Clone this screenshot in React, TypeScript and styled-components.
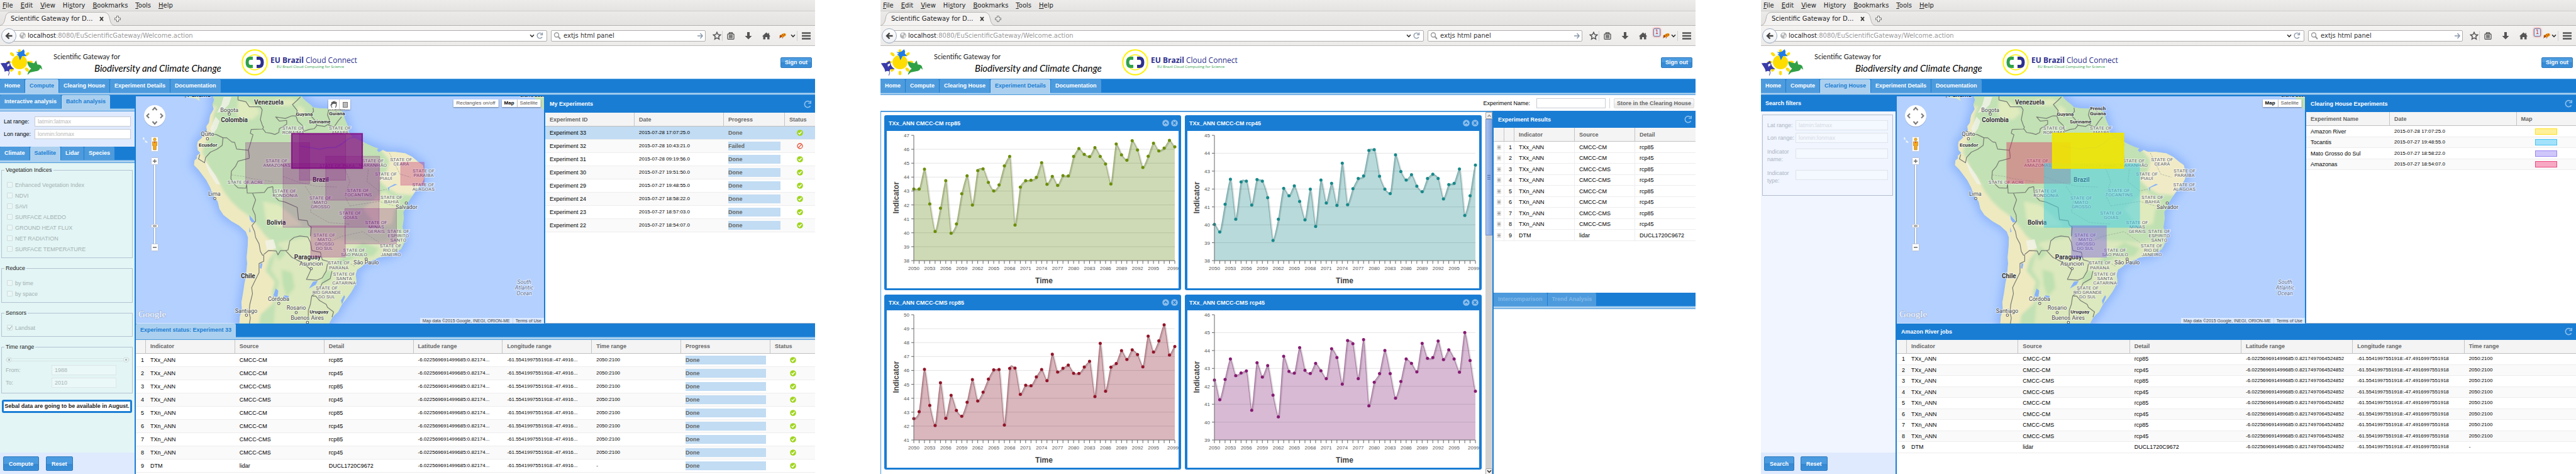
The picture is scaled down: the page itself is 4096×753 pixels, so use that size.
import React, { useId } from 'react';
import styled, { createGlobalStyle, css } from 'styled-components';

const ui = '"Liberation Sans", Arial, sans-serif';
const chromeFont = '"DejaVu Sans", sans-serif';
const color = {
  blue: '#1a7dd4',
  tab: '#4d9bdd',
  light: '#abd0ef',
  pale: '#dfeafe',
  teal: '#e3f5f5',
  grey: '#666',
};

const GlobalStyle = createGlobalStyle`
  * { box-sizing: border-box; }
  body { margin: 0; background: #fff; font: 9px/12px ${ui}; color: #000; }
  button, input { font: inherit; margin: 0; }
  button { padding: 0; border: 0; background: none; color: inherit; white-space: nowrap; }
  a { text-decoration: none; color: inherit; }
  svg { display: block; flex: none; }
  table { width: 100%; table-layout: fixed; border-collapse: separate; border-spacing: 0; }
`;

const Page = styled.main`
  display: grid;
  grid-template-columns: repeat(3, minmax(0, 1fr));
  gap: 104px;
  min-height: 100vh;
`;
const Browser = styled.section`
  display: flex;
  flex-direction: column;
  min-width: 0;
  overflow: hidden;
`;

/* ---------- browser chrome ---------- */
const MenuBar = styled.div`
  display: flex;
  gap: 12px;
  height: 18px;
  padding: 0 4px;
  border-bottom: 1px solid #cfcecb;
  background: linear-gradient(#edecea, #e4e3e1);
  font: 10px/17px ${chromeFont};
  color: #222;
`;
const TabStrip = styled.div`
  display: flex;
  align-items: flex-end;
  height: 23px;
  border-bottom: 1px solid #b4b2af;
  background: linear-gradient(#ebeae8, #e3e2e0);
  font: 10px/20px ${chromeFont};
  color: #222;
`;
const BrowserTab = styled.div`
  position: relative;
  display: flex;
  align-items: center;
  justify-content: space-between;
  width: 182px;
  height: 22px;
  padding: 0 17px;
  margin-bottom: -1px;
`;
const TabShape = styled.svg`
  position: absolute;
  inset: 0;
`;
const TabTitle = styled.span`
  position: relative;
`;
const TabClose = styled.button`
  position: relative;
  height: 10px;
`;
const NewTab = styled.button`
  padding: 0 0 5px;
`;
const ToolBar = styled.div`
  display: flex;
  align-items: center;
  height: 32px;
  border-bottom: 1px solid #bdbbb8;
  background: linear-gradient(#f4f3f2, #ecebea);
  font: 10px/16px ${chromeFont};
`;
const BackButton = styled.button`
  position: relative;
  z-index: 1;
  display: flex;
  align-items: center;
  justify-content: center;
  width: 24px;
  height: 24px;
  margin: 0 -6px 0 2px;
  border: 1px solid #9aa9bd;
  border-radius: 50%;
  background: linear-gradient(#fff, #eef0f3);
`;
const AddressBox = styled.div`
  display: flex;
  flex: 1;
  align-items: center;
  gap: 3px;
  height: 18px;
  padding: 0 5px 0 10px;
  border: 1px solid #b1afad;
  border-radius: 2px;
  background: #fff;
`;
const Address = styled.a`
  flex: 1;
  color: #9a9a9a;
  b { font-weight: normal; color: #222; }
`;
const SearchBox = styled.label`
  display: flex;
  align-items: center;
  gap: 4px;
  width: 246px;
  height: 18px;
  margin: 0 10px 0 6px;
  padding: 0 3px;
  border: 1px solid #b1afad;
  border-radius: 2px;
  background: #fff;
`;
const SearchInput = styled.input`
  flex: 1;
  min-width: 0;
  padding: 0;
  border: 0;
  background: none;
  color: #333;
  outline: 0;
`;
const Tool = styled.button<{ $w: number; $end?: boolean }>`
  position: relative;
  display: flex;
  align-items: center;
  justify-content: ${p => (p.$end ? 'flex-end' : 'center')};
  width: ${p => p.$w}px;
  height: 24px;
`;
const ToolRule = styled.span`
  width: 1px;
  height: 16px;
  background: #cfcfcf;
`;
const Badge = styled.span`
  position: absolute;
  top: 0;
  left: 2px;
  width: 11px;
  height: 13px;
  border: 1px solid #6f86ad;
  border-radius: 2px;
  box-shadow: 0 0 3px #e33;
  background: #dfe8f5;
  color: #c22;
  font: 8px/11px ${chromeFont};
  text-align: center;
`;

/* ---------- site header ---------- */
const SiteHeader = styled.header`
  display: flex;
  align-items: center;
  height: 52px;
  padding: 0 5px 0 0;
`;
const SiteTitle = styled.h1`
  display: flex;
  flex-direction: column;
  width: 299px;
  margin: 0 0 0 16px;
  font: 11px/19px Lato, sans-serif;
  color: #222;
  white-space: nowrap;
  em { padding-left: 65px; font-size: 15px; color: #000; }
`;
const Partner = styled.div`
  display: flex;
  align-items: center;
  gap: 4px;
  margin-right: auto;
  font: 12px/13px "Open Sans", sans-serif;
  color: #2c2f8c;
  white-space: nowrap;
  small { display: block; padding-left: 10px; font-size: 6px; line-height: 8px; color: #2fa24a; }
`;
const BlueButton = styled.button<{ $big?: boolean }>`
  height: ${p => (p.$big ? 23 : 17)}px;
  padding: 0 ${p => (p.$big ? 8 : 6)}px;
  border: 1px solid #2b78bd;
  border-radius: 2px;
  background: linear-gradient(#4b9be0 0 50%, #3588d2 50%, #3a8fd9);
  color: #fff;
  font-weight: bold;
`;

/* ---------- tabs and panels ---------- */
const TabBar = styled.nav<{ $top?: boolean }>`
  display: flex;
  flex: none;
  gap: 1px;
  height: 26px;
  border-top: ${p => (p.$top ? `1px solid ${color.tab}` : 0)};
  border-bottom: 1px solid ${color.tab};
  background: linear-gradient(${color.blue} 21px, #5fa8e3 21px 22px, ${color.light} 22px);
`;
const TabLink = styled.a<{ $on?: boolean; $off?: boolean }>`
  height: ${p => (p.$on ? 24 : 21)}px;
  padding: 0 7px;
  border-radius: 2px 2px 0 0;
  background: ${p => (p.$on ? color.light : color.tab)};
  color: ${p => (p.$on ? color.blue : p.$off ? '#82b9e8' : '#fff')};
  font-weight: bold;
  line-height: 21px;
  white-space: nowrap;
`;
const PanelTitle = styled.h2<{ $h?: number }>`
  display: flex;
  flex: none;
  align-items: center;
  justify-content: space-between;
  height: ${p => p.$h ?? 27}px;
  margin: 0;
  padding: 0 5px 0 7px;
  background: ${color.blue};
  color: #fff;
  font: bold 9px/12px ${ui};
`;
const Workspace = styled.div`
  display: grid;
  flex: 1;
  grid-template-columns: 216px minmax(0, 1fr) 431px;
  grid-template-rows: minmax(0, 1fr) 241px;
`;
const Sidebar = styled.aside<{ $bg: string }>`
  grid-row: 1 / 3;
  display: flex;
  flex-direction: column;
  border-right: 2px solid ${color.blue};
  background: ${p => p.$bg};
`;
const MapArea = styled.div`
  position: relative;
  border-top: 2px solid ${color.blue};
  overflow: hidden;
`;
const SidePanel = styled.section`
  border-left: 2px solid ${color.blue};
  border-bottom: 1px solid #9fb6cc;
`;
const BottomPanel = styled.section<{ $edge?: boolean }>`
  grid-column: 2 / 4;
  border-bottom: ${p => (p.$edge ? '1px solid #bbb' : 0)};
`;
const ButtonBar = styled.div<{ $gap: number }>`
  display: flex;
  align-items: center;
  gap: ${p => p.$gap}px;
  height: 36px;
  margin-top: auto;
  padding: 0 5px;
  background: ${color.pale};
`;

/* ---------- tables ---------- */
const Col = styled.col<{ $w?: string }>`
  width: ${p => p.$w ?? 'auto'};
`;
const Th = styled.th`
  height: 22px;
  padding: 0 7px;
  border-right: 1px solid #c4c4c4;
  border-bottom: 1px solid #c0c0c0;
  background: #f4f4f4;
  color: ${color.grey};
  text-align: left;
  white-space: nowrap;
  &:last-child { border-right: 0; }
`;
const Tr = styled.tr<{ $compact?: boolean; $striped?: boolean; $selected?: boolean }>`
  height: 21px;
  background: #fff;
  ${p => p.$compact && css`
    height: 18px;
    &:nth-child(even) { height: 17px; }
  `}
  ${p => p.$striped && css`&:nth-child(even) { background: #fafafa; }`}
  ${p => p.$selected && css`background: #c1dcf3;`}
`;
const Td = styled.td<{ $kind?: 'num' | 'index' | 'center'; $ruled?: boolean }>`
  padding: 0 7px;
  border-bottom: 1px solid #ededed;
  border-right: ${p => (p.$ruled ? '1px solid #ededed' : 0)};
  white-space: nowrap;
  line-height: 12px;
  ${p => p.$kind === 'num' && css`font-size: 8px;`}
  ${p => p.$kind === 'index' && css`padding: 0 3px 0 0; text-align: right;`}
  ${p => p.$kind === 'center' && css`
    padding: 0;
    text-align: center;
    svg { margin: 0 auto; }
  `}
`;
const Bar = styled.div`
  height: 14px;
  background: #c1dcf3;
  color: ${color.grey};
  font-weight: bold;
  line-height: 14px;
`;
const Swatch = styled.div<{ $c: string; $bg: string }>`
  width: 35px;
  height: 10px;
  margin: 0 auto;
  border: 1px solid ${p => p.$c};
  background: ${p => p.$bg};
`;

/* ---------- forms ---------- */
const RangeForm = styled.form`
  display: grid;
  grid-template-columns: 49px 1fr;
  gap: 4px 0;
  align-items: center;
  height: 56px;
  padding: 8px 6px 12px;
  background: ${color.pale};
`;
const Field = styled.input<{ $faint?: boolean }>`
  width: 100%;
  height: 16px;
  padding: 0 4px;
  border: 1px solid ${p => (p.$faint ? '#dde5ea' : '#c6ccd4')};
  background: ${p => (p.$faint ? 'rgba(255,255,255,.3)' : '#fff')};
  color: #a9b5b5;
  outline: 0;
  &::placeholder { color: ${p => (p.$faint ? '#d5dbe4' : '#b9b9b9')}; opacity: 1; }
`;
const Filters = styled.form`
  display: flex;
  flex-direction: column;
  gap: 10px;
  padding: 5px 3px 0 2px;
`;
const Group = styled.fieldset`
  min-width: 0;
  margin: 0;
  padding: 9px 6px 5px;
  border: 1px solid #b5c2d2;
  legend { padding: 0 2px; margin-left: -2px; line-height: 12px; color: #222; }
`;
const Check = styled.label`
  display: flex;
  align-items: center;
  gap: 4px;
  height: 17px;
  padding-left: 2px;
  color: #a3b2b2;
`;
const Box = styled.input`
  position: relative;
  appearance: none;
  width: 9px;
  height: 9px;
  border: 1px solid #cfdcdc;
  border-radius: 1px;
  background: #ebf7f7;
  &:checked::after {
    content: '';
    position: absolute;
    left: 2px;
    top: -1px;
    width: 3px;
    height: 6px;
    border: solid #9fb0b0;
    border-width: 0 1px 1px 0;
    rotate: 40deg;
  }
`;
const YearSlider = styled.div`
  position: relative;
  display: flex;
  height: 10px;
  margin: 0 -2px 4px 0;
`;
const Range = styled.input<{ $over?: boolean }>`
  appearance: none;
  position: ${p => (p.$over ? 'absolute' : 'static')};
  inset: 0;
  width: 100%;
  height: 10px;
  background: none;
  pointer-events: none;
  &::-webkit-slider-runnable-track {
    height: 5px;
    border: 1px solid #d8e5e6;
    border-radius: 3px;
  }
  &::-webkit-slider-thumb {
    appearance: none;
    width: 9px;
    height: 9px;
    margin-top: -3px;
    border: 1px solid #cfdcdc;
    border-radius: 50%;
    background: radial-gradient(#a9b8b8 1px, #eaf6f6 2px);
  }
`;
const Years = styled.div`
  display: grid;
  grid-template-columns: 73px 103px;
  gap: 4px 0;
  align-items: center;
  padding-bottom: 3px;
  color: #a3b2b2;
`;
const Notice = styled.p`
  height: 21px;
  margin: 0 1px;
  border: 3px solid ${color.blue};
  border-radius: 3px;
  background: #fff;
  color: #222;
  font-weight: bold;
  line-height: 15px;
  text-align: center;
  white-space: nowrap;
`;
const SearchGroup = styled.form`
  display: grid;
  grid-template-columns: 45px 147px;
  gap: 4px 0;
  align-items: center;
  margin: 5px 4px 0 2px;
  padding: 8px 7px 15px;
  border: 1px solid #b3bccb;
  color: #aeb4c1;
`;
const Tall = styled.div`
  display: contents;
  label { height: 24px; margin: 4px 0 2px; }
  input { align-self: start; margin-top: 5px; }
`;

/* ---------- map overlays ---------- */
const MapSvg = styled.svg`
  width: 100%;
  height: 100%;
  font-family: Roboto, sans-serif;
`;
const Controls = styled.div`
  position: absolute;
  top: 14px;
  left: 13px;
`;
const MapTypes = styled.div`
  position: absolute;
  top: 5px;
  right: 5px;
  display: flex;
`;
const MapButton = styled.button<{ $on?: boolean; $apart?: boolean }>`
  height: 12px;
  margin-right: ${p => (p.$apart ? 5 : 0)}px;
  padding: 0 4px;
  border-right: 1px solid #ddd;
  background: #fff;
  box-shadow: 0 1px 2px rgba(0, 0, 0, .4);
  color: ${p => (p.$on ? '#000' : '#555')};
  font-size: 8px;
  font-weight: ${p => (p.$on ? 'bold' : 'normal')};
  line-height: 12px;
`;
const DrawTools = styled.div`
  position: absolute;
  top: 5px;
  left: 306px;
  display: flex;
  gap: 1px;
  background: #ccc;
  box-shadow: 0 1px 2px rgba(0, 0, 0, .4);
`;
const DrawTool = styled.button`
  display: flex;
  align-items: center;
  justify-content: center;
  width: 17px;
  height: 16px;
  background: #fff;
`;
const Credits = styled.div`
  position: absolute;
  right: 0;
  bottom: 0;
  display: flex;
  background: rgba(245, 248, 255, .65);
  color: #444;
  font-size: 7px;
  line-height: 9px;
  a, span { padding: 0 4px; }
  a { border-left: 1px solid #c5d5f0; }
`;

/* ---------- experiment details ---------- */
const StoreBar = styled.form`
  display: flex;
  align-items: center;
  justify-content: flex-end;
  gap: 6px;
  height: 25px;
  padding-right: 2px;
  label { padding-right: 4px; }
`;
const NameField = styled(Field)`
  width: 110px;
`;
const Rule = styled.span`
  width: 1px;
  height: 16px;
  background: #d4d4d4;
`;
const StoreButton = styled.button`
  height: 16px;
  padding: 0 4px;
  border: 1px solid #dcdcdc;
  border-radius: 2px;
  background: linear-gradient(#f6f6f6 50%, #ececec 50%);
  color: ${color.grey};
  font-weight: bold;
`;
const Details = styled.div`
  display: grid;
  flex: 1;
  grid-template-columns: minmax(0, 1fr) 11px 323px;
  border-top: 2px solid ${color.tab};
`;
const Charts = styled.div`
  display: grid;
  grid-template-columns: 1fr 1fr;
  align-content: start;
  gap: 7px 6px;
  padding: 5px 6px 0 5px;
  border-left: 1px solid ${color.tab};
`;
const ChartCard = styled.article`
  padding: 0 4px 3px;
  border-radius: 3px;
  background: ${color.blue};
`;
const CardTools = styled.span`
  display: flex;
  gap: 3px;
  margin-right: -4px;
`;
const ChartTitle = styled(PanelTitle)`
  padding-left: 3px;
`;
const Plot = styled.svg`
  width: 100%;
  height: auto;
  background: #fff;
  font: 8px ${ui};
`;
const ScrollTrack = styled.div`
  display: flex;
  flex-direction: column;
  background: #d3d2d0;
`;
const ScrollEnd = styled.button<{ $last?: boolean }>`
  display: flex;
  align-items: center;
  justify-content: center;
  height: 11px;
  margin-top: ${p => (p.$last ? 'auto' : 0)};
  border: 1px solid #a5a5a5;
  border-radius: 2px;
  background: #f2f1f0;
`;
const ScrollThumb = styled.div`
  display: flex;
  align-items: center;
  justify-content: center;
  height: 185px;
  border: 1px solid #6d8fc8;
  background: linear-gradient(90deg, #a9c3f0, #7fa3e0);
`;
const Results = styled.section`
  display: flex;
  flex-direction: column;
  margin-top: -2px;
  border-left: 2px solid ${color.blue};
`;
const ResultList = styled.div`
  height: 262px;
`;

/* ---------- icons ---------- */
const RefreshIcon = ({ stroke = '#8dc0ec', size = 13 }: { stroke?: string; size?: number }) => (
  <svg width={size} height={size} viewBox="0 0 13 13" fill="none" stroke={stroke} strokeWidth="1.6">
    <path d="M10.6 9.3A5 5 0 1 1 10 3.2" />
    <path d="M11.2 1v4H7.2" />
  </svg>
);
const OkIcon = () => (
  <svg width="10" height="10" viewBox="0 0 10 10">
    <circle cx="5" cy="5" r="4.8" fill="#9fd51c" />
    <path d="M2.6 5.1 4.4 7 7.5 3" fill="none" stroke="#fff" strokeWidth="1.4" />
  </svg>
);
const FailIcon = () => (
  <svg width="10" height="10" viewBox="0 0 10 10" fill="none" stroke="#e8543a" strokeWidth="1.3">
    <circle cx="5" cy="5" r="4" />
    <path d="M2.4 7.6 7.6 2.4" />
  </svg>
);
const ExpandIcon = () => (
  <svg width="7" height="8" viewBox="0 0 7 8">
    <rect width="7" height="8" fill="#e3e3e3" />
    <path d="M3.5 1.5v5M1 4h5" stroke="#8b8b8b" />
  </svg>
);
const RoundIcon = ({ d }: { d: string }) => (
  <svg width="11" height="11" viewBox="0 0 11 11">
    <circle cx="5.5" cy="5.5" r="5.3" fill="#8cbdea" />
    <path d={d} fill="none" stroke={color.blue} strokeWidth="1.5" />
  </svg>
);
const Chevron = ({ up, faint }: { up?: boolean; faint?: boolean }) => (
  <svg width="8" height="6" viewBox="0 0 8 6" fill="none" stroke={faint ? '#999' : '#333'} strokeWidth="1.6">
    <path d={up ? 'M1.5 4.5 4 2l2.5 2.5' : 'M1 1.2 4 4.4l3-3.2'} />
  </svg>
);

const GatewayLogo = () => (
  <svg width="69" height="44" viewBox="0 160 280 190" preserveAspectRatio="none">
    <g fill="#fd0">
      <circle cx="126" cy="254" r="49" />
      <ellipse cx="126" cy="180" rx="9" ry="15" />
      <ellipse cx="126" cy="328" rx="9" ry="15" />
      <ellipse cx="78" cy="200" rx="10" ry="16" transform="rotate(-42 78 200)" />
      <ellipse cx="176" cy="199" rx="9" ry="15" transform="rotate(40 176 199)" />
      <ellipse cx="57" cy="254" rx="16" ry="9" />
      <ellipse cx="195" cy="254" rx="16" ry="10" />
      <ellipse cx="77" cy="306" rx="9" ry="15" transform="rotate(40 77 306)" />
      <ellipse cx="174" cy="305" rx="10" ry="16" transform="rotate(-40 174 305)" />
    </g>
    <path fill="#1f7be6" d="M102 184q20 4 32-2l19-17 6 16-2 14 15 18-29-1-14 28q-5-10-8-26l-15-16q10 1 13-2z" />
    <path fill="#3a3aa8" d="M3 262q18-5 32-2l24-16 7 22q4 20 26 34l-28 2-6 14q-20-4-27 5-3-22-12-34z" />
    <path fill="none" stroke="#3a3aa8" strokeWidth="4" d="M56 312q8 14-2 33" />
    <path fill="#fff" d="m46 270 16-8-1 16-9 2-3 10z" />
    <path fill="#2fa045" d="M176 248q24 10 44 14l13-20 8 28q18-2 26 12l6 24-14-12q-4 22-30 22l-34 8-18 18q2-24 24-44-24-18-25-50z" />
  </svg>
);
const PartnerLogo = () => (
  <svg width="42" height="42" viewBox="0 0 42 42" fill="none">
    <circle cx="21" cy="21" r="19.8" stroke="#fff200" strokeWidth="2" />
    <circle cx="21" cy="21" r="12" stroke="#fff200" strokeWidth="1.6" />
    <path d="M18 14.5h-4q-5 0-5 6.5t5 6.5h4" stroke="#2fa24a" strokeWidth="5" />
    <path d="M24 14.5h4q5 0 5 6.5t-5 6.5h-4" stroke="#2c2f8c" strokeWidth="5" />
  </svg>
);

/* ---------- shared browser frame ---------- */
const menus: [string, string, string][] = [
  ['', 'F', 'ile'], ['', 'E', 'dit'], ['', 'V', 'iew'], ['Hi', 's', 'tory'],
  ['', 'B', 'ookmarks'], ['', 'T', 'ools'], ['', 'H', 'elp'],
];
const sections = ['Home', 'Compute', 'Clearing House', 'Experiment Details', 'Documentation'];

const GatewayWindow = ({ active, badge, children }: { active: string; badge?: boolean; children: React.ReactNode }) => (
  <Browser>
    <MenuBar>
      {menus.map(([a, key, b]) => <button key={b}>{a}<u>{key}</u>{b}</button>)}
    </MenuBar>
    <TabStrip>
      <BrowserTab>
        <TabShape width="182" height="22" viewBox="0 0 182 22">
          <path d="M0 21.5Q6 21 8 11 9 1 16 .5H166Q173 1 174.500 11 176 21 182 21.5" fill="#f4f3f2" stroke="#b4b2af" />
        </TabShape>
        <TabTitle>Scientific Gateway for D...</TabTitle>
        <TabClose aria-label="Close tab">
          <svg width="7" height="10" viewBox="0 0 7 10"><path d="m1 2 5 6M6 2 1 8" stroke="#333" strokeWidth="1.8" /></svg>
        </TabClose>
      </BrowserTab>
      <NewTab aria-label="New tab">
        <svg width="10" height="10" viewBox="0 0 10 10">
          <path d="M3.5.5h3v3h3v3h-3v3h-3v-3h-3v-3h3z" fill="#f5f5f5" stroke="#777" />
        </svg>
      </NewTab>
    </TabStrip>
    <ToolBar>
      <BackButton aria-label="Back">
        <svg width="12" height="12" viewBox="0 0 12 12" fill="none" stroke="#444" strokeWidth="2.4">
          <path d="M11.5 6H2.5M6.5 1.5 2 6l4.5 4.5" />
        </svg>
      </BackButton>
      <AddressBox>
        <svg width="10" height="11" viewBox="0 0 10 11">
          <circle cx="5" cy="5.5" r="5" fill="#b5b5b5" />
          <path d="M1.5 3 5 1l1 2.5L3.5 6zM6 5.5l3-1-.5 3.5L6.5 10z" fill="#efefef" />
        </svg>
        <Address href="#address"><b>localhost</b>:8080/EuScientificGateway/Welcome.action</Address>
        <Chevron />
        <RefreshIcon stroke="#8a97a8" size={11} />
      </AddressBox>
      <SearchBox>
        <svg width="12" height="12" viewBox="0 0 12 12" fill="none" stroke="#999" strokeWidth="1.4">
          <circle cx="5" cy="4.5" r="3.5" /><path d="m7.5 7 3.5 4" strokeWidth="2" />
        </svg>
        <SearchInput aria-label="Search" defaultValue="extjs html panel" />
        <svg width="9" height="10" viewBox="0 0 9 10" fill="none" stroke="#8795a8" strokeWidth="1.4"><path d="M0 5h8M4.5 1 8 5 4.5 9" /></svg>
      </SearchBox>
      <Tool $w={16} aria-label="Bookmark">
        <svg width="14" height="14" viewBox="0 0 14 14">
          <path d="m7 1.2 1.7 3.7 4 .5-3 2.7.8 4.1L7 10.2l-3.5 2 .8-4.1-3-2.7 4-.5z" fill="none" stroke="#555" strokeWidth="1.5" />
        </svg>
      </Tool>
      <ToolRule />
      <Tool $w={26} aria-label="Library">
        <svg width="12" height="12" viewBox="0 0 12 12" fill="none" stroke="#555" strokeWidth="1.3">
          <rect x="1" y="3" width="10" height="8.3" rx="1" /><path d="M3.5 3V1h5v2M3 5.5h6M3 7.3h6M3 9.2h6" />
        </svg>
      </Tool>
      <Tool $w={29} aria-label="Downloads">
        <svg width="12" height="12" viewBox="0 0 12 12"><path d="M4 0h4v6h3.5L6 11.5.5 6H4z" fill="#555" /></svg>
      </Tool>
      <Tool $w={29} aria-label="Home page">
        <svg width="13" height="12" viewBox="0 0 13 12"><path d="M6.5.5 0 6.5l1.5.5V11.5H5V8h3v3.5h3.5V7l1.5-.5-2-2V1.5H9.5v1.7z" fill="#555" /></svg>
      </Tool>
      <Tool $w={badge ? 28 : 22} $end={badge} aria-label="Firebug">
        {badge && <Badge>1</Badge>}
        <svg width="12" height="10" viewBox="0 0 12 10">
          <ellipse cx="7.5" cy="4" rx="4.5" ry="2.8" fill="#f59a12" transform="rotate(-22 7.5 4)" />
          <circle cx="3.5" cy="5.5" r="2" fill="#b5500a" />
          <path d="m6 2 2 4M9 1.5l1 3M1 8.5l3-2M6 9 7 7" stroke="#8a2a08" strokeWidth=".8" />
        </svg>
      </Tool>
      <Tool $w={12} aria-label="Firebug options"><Chevron /></Tool>
      <ToolRule />
      <Tool $w={28} aria-label="Menu">
        <svg width="14" height="12" viewBox="0 0 14 12"><path d="M0 1.5h14M0 6h14M0 10.5h14" stroke="#555" strokeWidth="2.4" /></svg>
      </Tool>
    </ToolBar>
    <SiteHeader>
      <GatewayLogo />
      <SiteTitle>Scientific Gateway for<em>Biodiversity and Climate Change</em></SiteTitle>
      <Partner>
        <PartnerLogo />
        <div><b>EU Brazil</b> Cloud Connect<small>EU Brazil Cloud Computing for Science</small></div>
      </Partner>
      <BlueButton>Sign out</BlueButton>
    </SiteHeader>
    <TabBar $top aria-label="Sections">
      {sections.map(s => <TabLink key={s} href={`#${s}`} $on={s === active}>{s}</TabLink>)}
    </TabBar>
    {children}
  </Browser>
);

/* ---------- map ---------- */
/* Map features are kept on the survey grid and projected to drawing units. */
const gx = (x: number) => Math.round((x - 517) * 4.18) / 10;
const gy = (y: number) => Math.round((y - 636) * 2.402) / 10;
const path = (pts: string, close?: boolean) =>
  'M' + pts.split(' ').map(p => {
    const [x, y] = p.split(',').map(Number);
    return `${gx(x)} ${gy(y)}`;
  }).join('L') + (close ? 'Z' : '');

const west = '808,630 814,660 808,690 813,720 800,760 797,785 795,810 785,835 787,860 775,880 768,910 752,935 750,960 752,990 762,1010 748,1030 750,1045 740,1060 738,1090 755,1120 768,1150 785,1190 800,1240 810,1290 828,1330 835,1380 850,1420 880,1460 910,1490 935,1530 943,1568 942,1628 938,1700 940,1740 935,1830 930,1870 925,1930 918,2000 920,2050 912,2090 910,2140';
const east = '1250,2140 1262,2100 1272,2080 1285,2060 1300,2010 1318,1970 1335,1930 1345,1900 1355,1860 1352,1810 1358,1780 1375,1760 1390,1735 1425,1712 1440,1700 1475,1690 1500,1670 1525,1645 1537,1600 1540,1560 1530,1500 1535,1440 1533,1400 1545,1370 1550,1340 1565,1300 1580,1260 1600,1220 1612,1180 1614,1140 1607,1090 1590,1070 1566,1035 1540,1012 1500,1003 1470,1003 1455,990 1440,1005 1432,990 1438,980 1420,970 1395,950 1378,935 1340,905 1325,870 1322,830 1310,780 1305,740 1280,718 1245,716 1215,715 1190,708 1180,690 1165,670 1150,645 1148,630';
const coast = path(`${west} ${east}`, true);
const andes = path('825,700 812,760 812,840 800,900 775,960 770,1010 785,1060 800,1120 830,1190 850,1260 880,1330 910,1380 950,1430 985,1500 1010,1560 1040,1600 1045,1660 1020,1720 1010,1790 1045,1860 1035,1930 1040,2000 990,2080 985,2140 880,2140 880,1600 700,1200 700,900 790,700', true);
const northeast = path('1440,975 1480,1060 1470,1130 1440,1190 1470,1240 1510,1280 1570,1290 1640,1190 1640,1050 1560,980', true);
const south = path('1060,1600 1180,1560 1330,1590 1450,1600 1560,1560 1400,1800 1280,2140 1040,2140 1050,1950 1060,1860 1030,1780', true);
const meadow = [
  '905,660 940,670 975,700 990,745 960,790 920,790 900,760',
  '1000,1330 1060,1350 1120,1440 1150,1490 1060,1500 1010,1450',
  '1130,690 1160,720 1150,780 1128,745',
  '1380,1380 1460,1260 1520,1330 1500,1480 1430,1490',
  '1040,660 1100,650 1140,670 1100,700 1050,700',
].map(p => path(p, true)).join('');
const forest = [
  '1500,1380 1530,1370 1530,1500 1535,1580 1490,1600 1490,1480',
  '1240,1790 1262,1790 1255,1850 1225,1880 1222,1850',
  '1060,1620 1088,1670 1060,1720 1050,1690',
  '1380,1600 1440,1640 1420,1690 1350,1700 1290,1760 1270,1740 1330,1660',
  '1070,1780 1110,1800 1120,1900 1090,1960 1075,1880',
].map(p => path(p, true)).join('');
const snow = [
  '850,640 880,640 870,690 845,735 825,745 842,690',
  '820,770 835,800 825,850 808,890 800,850',
  '1008,1590 1040,1580 1050,1640 1015,1650',
  '775,1050 800,1110 820,1160 838,1220 822,1215 795,1140',
].map(p => path(p, true)).join('');
const lakes = [
  '948,1420 960,1445 970,1465 958,1470 950,1450', '1048,1905 1058,1920 1055,1960 1038,1960',
  '1080,1950 1098,1955 1094,1975 1078,1972', '990,1740 998,1740 994,1775 988,1770',
  '1190,1860 1208,1855 1200,1880 1175,1905', '1296,1985 1308,1950 1312,1960 1300,2010',
  '948,1500 953,1530 948,1535', '1500,1215 1510,1218 1480,1240 1478,1265 1474,1240',
].map(p => path(p, true)).join('');
const borders = [
  '905,636 905,660 935,672 948,705 990,705 997,725 990,790 998,830 1002,840 998,852 955,855 952,880 962,890 945,990 948,1035',
  '780,865 800,885 822,888 848,910 862,910 882,938 892,940 900,985 945,992 948,1045',
  '848,910 845,960 825,985 800,1005 782,1040 778,1075 755,1050 760,1020',
  '948,1045 905,1065 895,1100 880,1130 878,1180 890,1215 905,1240 935,1243 938,1215 940,1275 960,1275 1005,1270 1018,1240 1037,1232',
  '1037,1232 1040,1290 1060,1325 1085,1335 1130,1370 1135,1450 1168,1458 1172,1485 1183,1500 1180,1560',
  '960,1275 972,1320 960,1380 970,1420 972,1460 958,1490 968,1530 972,1568 985,1610 990,1660 998,1685 1003,1685',
  '1003,1680 1020,1655 1050,1657 1057,1683 1066,1655 1086,1655 1095,1650 1102,1590 1118,1568 1140,1558 1170,1565 1180,1600 1186,1655 1218,1665 1225,1715 1245,1725 1250,1745',
  '1086,1655 1110,1700 1150,1735 1182,1780 1172,1820 1165,1845 1205,1850 1225,1835 1240,1790 1245,1740',
  '1003,1685 1003,1725 985,1740 985,1800 965,1870 957,1900 960,1940 950,2010 947,2060 952,2100 948,2140',
  '1262,1790 1255,1840 1225,1870 1218,1895 1195,1940 1185,1955 1180,2010 1172,2050 1172,2100',
  '1188,1955 1200,1955 1215,1985 1240,2010 1245,2030 1268,2060 1262,2095',
  '1000,852 1010,875 1030,880 1045,888 1060,875 1062,850 1090,820 1090,795 1062,800 1048,772 1085,782 1110,765 1125,765',
  '1142,640 1128,665 1112,690 1130,730 1125,765 1132,800 1150,830 1155,868 1175,855 1195,850 1205,828 1235,835 1245,823 1270,838 1285,800 1298,772',
  '1190,712 1192,735 1180,760 1195,790 1205,828', '1250,720 1245,760 1252,790 1250,825', '705,632 705,645',
].map(p => path(p)).join('');
const stateLines = [
  '880,1155 925,1165 960,1180 1040,1200', '1076,1165 1130,1200 1200,1230 1280,1235', '1310,1110 1330,1200 1310,1290 1330,1360',
  '1400,1120 1395,1200 1440,1260 1470,1250', '1380,950 1375,1010 1390,1080', '1160,1230 1190,1310 1180,1400 1250,1470 1330,1480',
  '1330,1360 1440,1330 1500,1360', '1250,1600 1300,1560 1380,1530 1440,1600', '1250,1730 1310,1720 1350,1760', '1480,1010 1500,1080 1520,1150 1560,1170',
].map(p => path(p)).join('');

type Label = [number, number, ...string[]];
const countries: Label[] = [
  [757, 640, 'Panama'], [1022, 690, 'Venezuela'], [891, 808, 'Colombia'], [1050, 1483, 'Bolivia'],
  [1219, 1203, 'Brazil'], [1169, 1713, 'Paraguay'], [943, 1839, 'Chile'],
];
const smallCountries: Label[] = [
  [1157, 764, 'Guyana'], [1215, 816, 'Suriname'], [1281, 728, 'French', 'Guiana'], [791, 970, 'Ecuador'],
  [1213, 2070, 'Uruguay'], [2030, 640, 'Sierra Leone'],
];
const states: Label[] = [
  [1115, 856, 'STATE OF', 'RORAIMA'], [1292, 857, 'STATE OF', 'AMAPÁ'], [1052, 1071, 'STATE OF', 'AMAZONAS'],
  [1281, 1106, 'STATE OF PARÁ'], [1417, 1071, 'STATE OF', 'MARANHÃO'], [1525, 1065, 'STATE OF', 'CEARÁ'],
  [1467, 1159, 'STATE OF', 'PIAUÍ'], [933, 1213, 'STATE OF ACRE'], [1084, 1272, 'STATE OF', 'RONDÔNIA'],
  [1361, 1267, 'STATE OF', 'TOCANTINS'], [1218, 1319, 'STATE OF', 'MATO', 'GROSSO'], [1488, 1315, 'STATE OF', 'BAHIA'],
  [1331, 1417, 'STATE OF', 'GOIÁS'], [1430, 1479, 'STATE OF', 'MINAS', 'GERAIS'], [1514, 1538, 'STATE OF', 'ESPIRITO', 'SANTO'],
  [1233, 1564, 'STATE OF', 'MATO', 'GROSSO', 'DO SUL'], [1485, 1633, 'STATE OF', 'RIO DE', 'JANEIRO'],
  [1346, 1662, 'STATE OF', 'SÃO PAULO'], [1288, 1748, 'STATE OF', 'PARANÁ'], [1308, 1822, 'STATE OF', 'SANTA', 'CATARINA'],
  [1242, 1912, 'STATE OF', 'RIO GRANDE', 'DO SUL'], [1610, 1140, 'STATE OF', 'PARAÍBA'], [1609, 1232, 'STATE OF', 'ALAGOAS'],
];
const cities: [string, number, number, number, number][] = [
  ['Bogota', 872, 738, 872, 754], ['Quito', 789, 899, 789, 916], ['Lima', 815, 1294, 817, 1311],
  ['Salvador', 1545, 1382, 1544, 1341], ['São Paulo', 1392, 1748, 1392, 1711], ['Asuncion', 1183, 1756, 1183, 1774],
  ['Córdoba', 1059, 1987, 1060, 2004], ['Rosario', 1126, 2044, 1126, 2064], ['Santiago', 936, 2066, 937, 2081],
  ['Buenos Aires', 1168, 2112, 1169, 2129],
];

const Labels = ({ list, step, ...rest }: { list: Label[]; step: number } & React.SVGProps<SVGGElement>) => (
  <g textAnchor="middle" {...rest}>
    {list.map(([x, y, ...lines]) => lines.map((line, i) => (
      <text key={line + x + i} x={gx(x)} y={gy(y) + i * step}>{line}</text>
    )))}
  </g>
);

type Zone = { x: [number, number]; y: [number, number]; fill: string; opacity: number; edge?: number; edgeOpacity?: number };

const RegionMap = ({ zones, tools }: { zones: Zone[]; tools?: boolean }) => {
  const id = useId().replace(/:/g, '');
  return (
    <MapArea>
      <MapSvg viewBox="0 0 648 360" preserveAspectRatio="xMidYMid slice" role="img" aria-label="Map of South America">
        <defs>
          <clipPath id={`land${id}`}><path d={coast} /></clipPath>
          <filter id={`shelf${id}`} x="-20%" y="-20%" width="140%" height="140%"><feGaussianBlur stdDeviation="7" /></filter>
          <filter id={`soft${id}`}><feGaussianBlur stdDeviation="2" /></filter>
        </defs>
        <rect width="648" height="360" fill="#b3d0ff" />
        <path d={coast} fill="#8fb6fb" stroke="#8fb6fb" strokeWidth="12" filter={`url(#shelf${id})`} />
        <path d={coast} fill="#c2e1b4" />
        <g clipPath={`url(#land${id})`}>
          <g filter={`url(#soft${id})`}>
            <path d={south} fill="#dce8bd" />
            <path d={meadow} fill="#dfeabd" />
            <path d={andes} fill="#efe9c0" />
            <path d={northeast} fill="#f0ebc6" />
            <path d={forest} fill="#bfe0b0" />
          </g>
          <path d={snow} fill="#f1f2ea" opacity=".8" />
        </g>
        <path d={path('2025,630 2040,665 2052,690 2060,715 2075,740 2075,630', true)} fill="#c2e1b4" />
        <path d={path('715,630 720,645 745,650 760,668 755,640 775,630', true)} fill="#dcebc0" />
        <path d={path('543,910 548,905 550,925 545,922', true) + path('552,925 560,935 562,945 552,940', true)} fill="#eef4ee" />
        <path d={lakes} fill="#88b2fb" />
        <path d={stateLines} fill="none" stroke="#9aa59a" strokeWidth=".7" strokeDasharray="3 1.5" />
        <path d={borders} fill="none" stroke="#777d74" strokeWidth="1.2" strokeLinejoin="round" />
        <path d={path('1140,965 1180,975 1215,985 1245,975 1275,975 1300,950 1325,915 1350,905')} fill="none" stroke="#88b2fb" strokeWidth="1.5" />
        <g stroke="#fff" strokeOpacity=".6" strokeWidth="2" paintOrder="stroke" strokeLinejoin="round">
          <Labels list={states} step={7} fontSize="8" fill="#666" />
          <Labels list={countries} step={7} fontSize="10" fontWeight="bold" fill="#333" />
          <Labels list={smallCountries} step={8} fontSize="8" fontWeight="bold" fill="#333" />
          <g fontSize="9" fill="#444" textAnchor="middle">
            {cities.map(([name, x, y]) => <text key={name} x={gx(x)} y={gy(y)}>{name}</text>)}
          </g>
          <Labels list={[[1992, 1874, 'South', 'Atlantic', 'Ocean']]} step={9} fontSize="9" fontStyle="italic" fill="#5a6f96" />
        </g>
        <g fill="#fff" stroke="#555">
          {cities.map(([name, , , x, y]) => <circle key={name} cx={gx(x)} cy={gy(y)} r="1.8" />)}
        </g>
        {zones.map((z, i) => (
          <rect key={i} x={gx(z.x[0])} y={gy(z.y[0])} width={gx(z.x[1]) - gx(z.x[0])} height={gy(z.y[1]) - gy(z.y[0])}
            fill={z.fill} fillOpacity={z.opacity} stroke={z.fill} strokeWidth={z.edge ?? 1} strokeOpacity={z.edgeOpacity ?? 0.25} />
        ))}
        <text x="4" y="350" fontFamily="Liberation Serif, serif" fontSize="15" fill="#fff" stroke="#8fa5cc" strokeWidth="1" paintOrder="stroke">Google</text>
      </MapSvg>
      <Controls>
        <svg width="40" height="236" viewBox="0 0 40 236">
          <circle cx="17" cy="18" r="17" fill="#7d8fae" opacity=".6" />
          <circle cx="17" cy="17" r="17" fill="#fff" />
          <path d="m13.5 8 3.5-4 3.5 4M13.5 26l3.5 4 3.5-4M8 13.5 4.5 17 8 20.5M26 13.5 29.5 17 26 20.5" fill="none" stroke="#777" strokeWidth="2" />
          <rect x="11.5" y="50.5" width="11" height="23" rx="1" fill="#fff" stroke="#c5cbd8" />
          <circle cx="17" cy="54.5" r="2.3" fill="#f5b11b" stroke="#a66f10" strokeWidth=".5" />
          <path d="M13.5 58h7v6.5h-1.2V71h-4.600v-6.5h-1.2z" fill="#f5a81b" stroke="#a66f10" strokeWidth=".6" />
          <path d="m15.5 58 1.5 2.5 1.5-2.5z" fill="#d8401c" />
          <path d="M17 95v125" stroke="#8796b0" strokeWidth="3" /><path d="M17 95v125" stroke="#fff" strokeWidth="2" />
          <g fill="#fff" stroke="#b9c1d0">
            <rect x="11.5" y="83.5" width="11" height="11" rx="1" />
            <rect x="11.5" y="189.5" width="11" height="5" rx="1" />
            <rect x="11.5" y="220.5" width="11" height="11" rx="1" />
          </g>
          <path d="M14 89h6M17 86v6M14 192h6M14 226h6" stroke="#666" strokeWidth="1.3" />
        </svg>
      </Controls>
      {tools && (
        <DrawTools>
          <DrawTool aria-label="Pan the map">
            <svg width="12" height="12" viewBox="0 0 12 12"><path d="M3 11C2 9 1 7.5 1 6.5s1-.8 1.5.5L3 7 2.3 3q.4-1.3 1.3 0L4 5 4.3 1.5q.7-1.2 1.4 0L6 5l.7-3.5q.8-1 1.3 0V5l1-2.5q1-.6 1 .5L9.5 8 8.5 11" fill="none" stroke="#222" /></svg>
          </DrawTool>
          <DrawTool aria-label="Draw a rectangle">
            <svg width="8" height="9" viewBox="0 0 8 9"><rect x=".5" y=".5" width="7" height="8" fill="#bbb" stroke="#777" /></svg>
          </DrawTool>
        </DrawTools>
      )}
      <MapTypes>
        {tools && <MapButton $apart>Rectangles on/off</MapButton>}
        <MapButton $on>Map</MapButton>
        <MapButton>Satellite</MapButton>
      </MapTypes>
      <Credits><span>Map data ©2015 Google, INEGI, ORION-ME</span><a href="#terms">Terms of Use</a></Credits>
    </MapArea>
  );
};

const purple = '#800080';
const experimentZones: Zone[] = [
  { x: [934, 1177], y: [942, 1214], fill: purple, opacity: 0.22 },
  { x: [1076, 1441], y: [1080, 1501], fill: purple, opacity: 0.2 },
  { x: [1238, 1443], y: [1032, 1322], fill: purple, opacity: 0.2 },
  { x: [1138, 1314], y: [883, 1190], fill: purple, opacity: 0.2 },
  { x: [1311, 1507], y: [1378, 1610], fill: purple, opacity: 0.22 },
  { x: [1181, 1313], y: [1491, 1698], fill: '#a02080', opacity: 0.3 },
  { x: [1523, 1612], y: [1072, 1223], fill: '#c01870', opacity: 0.3 },
  { x: [1109, 1377], y: [883, 1111], fill: purple, opacity: 0.68, edge: 2, edgeOpacity: 0.8 },
];
const houseZones: Zone[] = [
  { x: [934, 1177], y: [940, 1212], fill: '#e0245a', opacity: 0.38, edgeOpacity: 0.1 },
  { x: [1076, 1440], y: [1078, 1503], fill: '#45d0e6', opacity: 0.52, edgeOpacity: 0.1 },
  { x: [1180, 1314], y: [1490, 1700], fill: '#7a5ae0', opacity: 0.42, edgeOpacity: 0.1 },
  { x: [1109, 1378], y: [881, 1110], fill: '#eee400', opacity: 0.9, edge: 2, edgeOpacity: 1 },
];

/* ---------- data ---------- */
const lat = '-6.022569691499685:0.8217497064524852';
const lon = '-61.5541997551918:-47.4916997551918';
const shorten = (value: string, length: number) => `${value.slice(0, length)}...`;
const jobs = [
  ['TXx_ANN', 'CMCC-CM', 'rcp85'], ['TXx_ANN', 'CMCC-CM', 'rcp45'], ['TXx_ANN', 'CMCC-CMS', 'rcp85'],
  ['TXx_ANN', 'CMCC-CMS', 'rcp45'], ['TXn_ANN', 'CMCC-CM', 'rcp85'], ['TXn_ANN', 'CMCC-CM', 'rcp45'],
  ['TXn_ANN', 'CMCC-CMS', 'rcp85'], ['TXn_ANN', 'CMCC-CMS', 'rcp45'], ['DTM', 'lidar', 'DUCL1720C9672'],
].map(([indicator, source, detail]) => ({ indicator, source, detail, years: indicator === 'DTM' ? '-' : '2050:2100' }));
const experiments: [number, string][] = [
  [33, '2015-07-28 17:07:25.0'], [32, '2015-07-28 10:43:21.0'], [31, '2015-07-28 09:19:56.0'], [30, '2015-07-27 19:51:50.0'],
  [29, '2015-07-27 19:48:55.0'], [24, '2015-07-27 18:58:22.0'], [23, '2015-07-27 18:57:03.0'], [22, '2015-07-27 18:54:07.0'],
];
const houseRows = [
  ['Amazon River', '2015-07-28 17:07:25.0', '#ffe11a', '#fff09a'], ['Tocantis', '2015-07-27 19:48:55.0', '#45c4f5', '#a3e2fb'],
  ['Mato Grosso do Sul', '2015-07-27 18:58:22.0', '#9a86f2', '#cfc6fa'], ['Amazonas', '2015-07-27 18:54:07.0', '#ee4a80', '#f7a8c3'],
];

const Head = ({ titles }: { titles: string[] }) => (
  <thead><tr>{titles.map((t, i) => <Th key={i} scope="col">{t}</Th>)}</tr></thead>
);

/* ---------- charts ---------- */
type Series = { title: string; min: number; max: number; dot: string; fill: string; values: number[] };
const series: Series[] = [
  { title: 'TXx_ANN CMCC-CM rcp85', min: 38, max: 47, dot: '#6b8e05', fill: '#cedab5', values: [43.14, 43.14, 44.57, 42.07, 40.09, 41.77, 43.74, 39.97, 40.63, 42.8, 44.09, 41.99, 44.47, 44.59, 43.62, 43.01, 43.44, 44.81, 45.49, 40.55, 43.28, 43.74, 43.78, 43.98, 45.03, 43.48, 44.05, 43.4, 44.11, 44.08, 45.48, 46.05, 45.63, 45.47, 46.12, 45.49, 44.94, 43.51, 46.38, 45.6, 45.21, 46.62, 45.95, 44.69, 45.5, 46.44, 45.88, 46.08, 46.64, 46.18] },
  { title: 'TXx_ANN CMCC-CM rcp45', min: 38, max: 45, dot: '#16888a', fill: '#b8dada', values: [40.02, 39.6, 41.15, 42.55, 40.31, 42.4, 42.44, 41.1, 42.53, 42.44, 41.52, 39.13, 40.31, 42.04, 41.62, 42.18, 41.31, 40.28, 41.99, 39.91, 42.5, 41.22, 42.32, 41.09, 43.44, 41.12, 42.02, 42.59, 42.73, 44.16, 44.2, 42.71, 41.99, 41.75, 43.91, 42.98, 42.5, 42.8, 42.16, 41.85, 42.59, 42.83, 42.59, 41.45, 42.25, 42.32, 43.12, 40.52, 41.62, 43.34] },
  { title: 'TXx_ANN CMCC-CMS rcp85', min: 41, max: 50, dot: '#921428', fill: '#dab6bd', values: [42.54, 43.04, 46.08, 43.49, 42.04, 45.11, 42.56, 44.21, 43.12, 42.71, 43.71, 45.34, 43.8, 44.44, 45.38, 46.04, 46.06, 42.07, 46.15, 46.17, 44.28, 44.93, 44.9, 45.53, 46.06, 45.26, 47.16, 45.88, 46.16, 46.38, 45.79, 45.78, 46.25, 46.65, 44.12, 47.94, 44.51, 46.24, 46.5, 47.42, 46.79, 47.48, 47.14, 46.26, 48.46, 47.32, 48.12, 49.28, 47.1, 47.72] },
  { title: 'TXx_ANN CMCC-CMS rcp45', min: 39, max: 46, dot: '#861a72', fill: '#d8bad5', values: [42.35, 41.25, 42.39, 43.53, 42.6, 42.75, 42.86, 40.66, 43.32, 42.52, 43.16, 41.51, 40.29, 43.68, 42.83, 42.74, 44.16, 42.9, 42.72, 43.28, 42.87, 42.43, 44.1, 43.61, 42.12, 44.56, 44.38, 42.43, 44.61, 40.91, 42.23, 42.71, 44, 42.71, 41.34, 42.27, 43.53, 43.28, 42.81, 44.4, 43.56, 43.61, 44.53, 43.49, 44.04, 43.53, 42.79, 45.01, 43.44, 41.73] },
];

const left = 43, right = 458, top = 7, bottom = 206;
const AreaChart = ({ s }: { s: Series }) => {
  const dx = (right - left) / (s.values.length - 1);
  const x = (i: number) => left + i * dx;
  const y = (v: number) => bottom - ((v - s.min) / (s.max - s.min)) * (bottom - top);
  const pts = s.values.map((v, i) => [x(i), y(v)]);
  const slope = pts.map((p, i) => {
    if (i === 0 || i === pts.length - 1) return 0;
    const a = p[1] - pts[i - 1][1];
    const b = pts[i + 1][1] - p[1];
    return a * b <= 0 ? 0 : (a + b) / 2;
  });
  const line = pts.map(([px, py], i) => {
    if (i === 0) return `M${px} ${py}`;
    const [qx, qy] = pts[i - 1];
    return `C${qx + dx / 5} ${qy + slope[i - 1] / 5} ${px - dx / 5} ${py - slope[i] / 5} ${px} ${py}`;
  }).join('');
  const levels = Array.from({ length: s.max - s.min + 1 }, (_, i) => s.min + i);
  const years = [...Array.from({ length: 16 }, (_, i) => i * 3), 49];
  return (
    <Plot viewBox="0 0 464 250" role="img" aria-label={s.title}>
      <path d={`${line}L${right} ${bottom}L${left} ${bottom}Z`} fill={s.fill} />
      <g fill="none" stroke="#000" strokeOpacity=".11">
        {levels.slice(1, -1).map(v => <path key={v} d={`M${left} ${y(v)}H${right}`} />)}
        <path d={line} strokeWidth="3" strokeOpacity=".13" transform="translate(1 1)" />
      </g>
      <path d={line} fill="none" stroke={s.dot} strokeOpacity=".5" />
      <g fill={s.dot}>{pts.map(([px, py], i) => <circle key={i} cx={px} cy={py} r="2.5" />)}</g>
      <g stroke="#666" fill="none">
        <path d={`M${left} ${top}V${bottom}H${right}`} />
        {levels.map(v => <path key={v} d={`M${left - 4} ${y(v)}H${left}`} />)}
        {pts.map(([px], i) => <path key={i} d={`M${px} ${bottom}v5`} />)}
      </g>
      <g fill="#555">
        {levels.map(v => <text key={v} x="36" y={y(v) + 3} textAnchor="end">{v}</text>)}
        {years.map(i => <text key={i} x={i === 49 ? 455 : x(i)} y="221" textAnchor="middle">{2050 + i}</text>)}
      </g>
      <g fill="#444" fontSize="12" fontWeight="bold" textAnchor="middle">
        <text x="250" y="242">Time</text>
        <text transform="translate(19 106) rotate(-90)">Indicator</text>
      </g>
    </Plot>
  );
};

/* ---------- the three windows ---------- */
const indices = ['Enhanced Vegetation Index', 'NDVI', 'SAVI', 'SURFACE ALBEDO', 'GROUND HEAT FLUX', 'NET RADIATION', 'SURFACE TEMPERATURE'];
const CheckRow = ({ text, on }: { text: string; on?: boolean }) => (
  <Check><Box type="checkbox" disabled defaultChecked={on} />{text}</Check>
);

const ComputeWindow = () => (
  <GatewayWindow active="Compute">
    <Workspace>
      <Sidebar $bg={color.teal}>
        <TabBar>
          <TabLink href="#interactive">Interactive analysis</TabLink>
          <TabLink href="#batch" $on>Batch analysis</TabLink>
        </TabBar>
        <RangeForm>
          <label htmlFor="lat">Lat range:</label><Field id="lat" placeholder="latmin:latmax" />
          <label htmlFor="lon">Lon range:</label><Field id="lon" placeholder="lonmin:lonmax" />
        </RangeForm>
        <TabBar>
          <TabLink href="#climate">Climate</TabLink>
          <TabLink href="#satellite" $on>Satellite</TabLink>
          <TabLink href="#lidar">Lidar</TabLink>
          <TabLink href="#species">Species</TabLink>
        </TabBar>
        <Filters>
          <Group><legend>Vegetation Indices</legend>{indices.map(t => <CheckRow key={t} text={t} />)}</Group>
          <Group><legend>Reduce</legend><CheckRow text="by time" /><CheckRow text="by space" /></Group>
          <Group><legend>Sensors</legend><CheckRow text="Landsat" on /></Group>
          <Group>
            <legend>Time range</legend>
            <YearSlider>
              <Range type="range" aria-label="First year" disabled min={1988} max={2010} defaultValue={1988} />
              <Range $over type="range" aria-label="Last year" disabled min={1988} max={2010} defaultValue={2010} />
            </YearSlider>
            <Years>
              <label htmlFor="from">From:</label><Field $faint id="from" disabled defaultValue="1988" />
              <label htmlFor="to">To:</label><Field $faint id="to" disabled defaultValue="2010" />
            </Years>
          </Group>
          <Notice>Sebal data are going to be available in August.</Notice>
        </Filters>
        <ButtonBar $gap={11}><BlueButton $big>Compute</BlueButton><BlueButton $big>Reset</BlueButton></ButtonBar>
      </Sidebar>
      <RegionMap zones={experimentZones} tools />
      <SidePanel>
        <PanelTitle $h={28}>My Experiments<RefreshIcon /></PanelTitle>
        <table>
          <colgroup><Col /><Col /><Col $w="97px" /><Col $w="48px" /></colgroup>
          <Head titles={['Experiment ID', 'Date', 'Progress', 'Status']} />
          <tbody>
            {experiments.map(([n, date]) => (
              <Tr key={n} $striped $selected={n === 33}>
                <Td>Experiment {n}</Td>
                <Td $kind="num">{date}</Td>
                <Td><Bar>{n === 32 ? 'Failed' : 'Done'}</Bar></Td>
                <Td $kind="center">{n === 32 ? <FailIcon /> : <OkIcon />}</Td>
              </Tr>
            ))}
          </tbody>
        </table>
      </SidePanel>
      <BottomPanel $edge>
        <TabBar><TabLink href="#status" $on>Experiment status: Experiment 33</TabLink></TabBar>
        <table>
          <colgroup><Col $w="16px" /><Col /><Col /><Col /><Col /><Col /><Col /><Col /><Col $w="71px" /></colgroup>
          <Head titles={['', 'Indicator', 'Source', 'Detail', 'Latitude range', 'Longitude range', 'Time range', 'Progress', 'Status']} />
          <tbody>
            {jobs.map((j, i) => (
              <Tr key={i} $striped>
                <Td $kind="index">{i + 1}</Td><Td>{j.indicator}</Td><Td>{j.source}</Td><Td>{j.detail}</Td>
                <Td $kind="num">{shorten(lat, 26)}</Td><Td $kind="num">{shorten(lon, 26)}</Td><Td $kind="num">{j.years}</Td>
                <Td><Bar>Done</Bar></Td><Td $kind="center"><OkIcon /></Td>
              </Tr>
            ))}
          </tbody>
        </table>
      </BottomPanel>
    </Workspace>
  </GatewayWindow>
);

const DetailsWindow = () => (
  <GatewayWindow active="Experiment Details" badge>
    <StoreBar>
      <label htmlFor="name">Experiment Name:</label>
      <NameField id="name" />
      <Rule />
      <StoreButton type="button">Store in the Clearing House</StoreButton>
    </StoreBar>
    <Details>
      <Charts>
        {series.map(s => (
          <ChartCard key={s.title}>
            <ChartTitle $h={25}>
              {s.title}
              <CardTools>
                <button aria-label="Collapse"><RoundIcon d="M3 6.8 5.5 4 8 6.8" /></button>
                <button aria-label="Close"><RoundIcon d="m3.3 3.3 4.4 4.4m0-4.4L3.3 7.7" /></button>
              </CardTools>
            </ChartTitle>
            <AreaChart s={s} />
          </ChartCard>
        ))}
      </Charts>
      <ScrollTrack>
        <ScrollEnd aria-label="Scroll up"><Chevron up faint /></ScrollEnd>
        <ScrollThumb>
          <svg width="5" height="7" viewBox="0 0 5 7"><path d="M0 .5h5M0 3.5h5M0 6.5h5" stroke="#4668a5" /></svg>
        </ScrollThumb>
        <ScrollEnd $last aria-label="Scroll down"><Chevron /></ScrollEnd>
      </ScrollTrack>
      <Results>
        <PanelTitle>Experiment Results<RefreshIcon /></PanelTitle>
        <ResultList>
          <table>
            <colgroup><Col $w="17px" /><Col $w="16px" /><Col /><Col /><Col /></colgroup>
            <Head titles={['', '', 'Indicator', 'Source', 'Detail']} />
            <tbody>
              {jobs.map((j, i) => (
                <Tr key={i} $compact>
                  <Td $ruled $kind="center"><ExpandIcon /></Td><Td $ruled $kind="index">{i + 1}</Td>
                  <Td $ruled>{j.indicator}</Td><Td $ruled>{j.source}</Td><Td>{j.detail}</Td>
                </Tr>
              ))}
            </tbody>
          </table>
        </ResultList>
        <TabBar>
          <TabLink href="#intercomparison" $off>Intercomparison</TabLink>
          <TabLink href="#trend" $off>Trend Analysis</TabLink>
        </TabBar>
      </Results>
    </Details>
  </GatewayWindow>
);

const ClearingHouseWindow = () => (
  <GatewayWindow active="Clearing House" badge>
    <Workspace>
      <Sidebar $bg="#f0f5ff">
        <PanelTitle $h={26}>Search filters</PanelTitle>
        <SearchGroup>
          <label htmlFor="s-lat">Lat range:</label><Field $faint id="s-lat" disabled placeholder="latmin:latmax" />
          <label htmlFor="s-lon">Lon range:</label><Field $faint id="s-lon" disabled placeholder="lonmin:lonmax" />
          <Tall><label htmlFor="s-name">Indicator name:</label><Field $faint id="s-name" disabled /></Tall>
          <Tall><label htmlFor="s-type">Indicator type:</label><Field $faint id="s-type" disabled /></Tall>
        </SearchGroup>
        <ButtonBar $gap={10}><BlueButton $big>Search</BlueButton><BlueButton $big>Reset</BlueButton></ButtonBar>
      </Sidebar>
      <RegionMap zones={houseZones} />
      <SidePanel>
        <PanelTitle>Clearing House Experiments<RefreshIcon /></PanelTitle>
        <table>
          <colgroup><Col $w="31%" /><Col $w="47%" /><Col /></colgroup>
          <Head titles={['Experiment Name', 'Date', 'Map']} />
          <tbody>
            {houseRows.map(([name, date, c, bg]) => (
              <Tr key={name} $compact $striped>
                <Td>{name}</Td><Td $kind="num">{date}</Td><Td $kind="center"><Swatch $c={c} $bg={bg} /></Td>
              </Tr>
            ))}
          </tbody>
        </table>
      </SidePanel>
      <BottomPanel>
        <PanelTitle $h={26}>Amazon River jobs<RefreshIcon /></PanelTitle>
        <table>
          <colgroup><Col $w="16px" /><Col /><Col /><Col /><Col /><Col /><Col /></colgroup>
          <Head titles={['', 'Indicator', 'Source', 'Detail', 'Latitude range', 'Longitude range', 'Time range']} />
          <tbody>
            {jobs.map((j, i) => (
              <Tr key={i} $compact $striped>
                <Td $kind="index">{i + 1}</Td><Td>{j.indicator}</Td><Td>{j.source}</Td><Td>{j.detail}</Td>
                <Td $kind="num">{lat}</Td><Td $kind="num">{lon}</Td><Td $kind="num">{j.years}</Td>
              </Tr>
            ))}
          </tbody>
        </table>
      </BottomPanel>
    </Workspace>
  </GatewayWindow>
);

export default function App() {
  return (
    <>
      <GlobalStyle />
      <Page>
        <ComputeWindow />
        <DetailsWindow />
        <ClearingHouseWindow />
      </Page>
    </>
  );
}
